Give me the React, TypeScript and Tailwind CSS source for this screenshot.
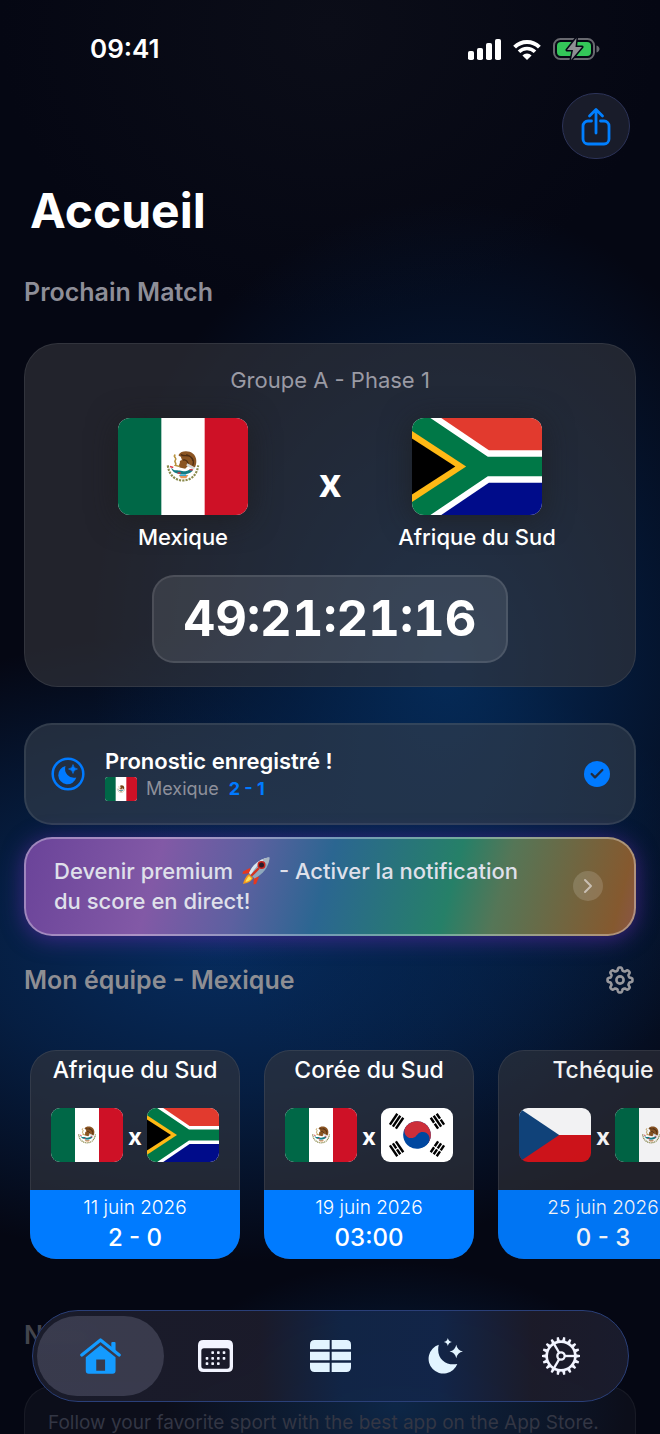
import React from 'react';
import clsx from 'clsx';
import { Check, ChevronRight } from 'lucide-react';

type Country = 'mx' | 'za' | 'kr' | 'cz';

const MATCHES: { title: string; home: Country; away: Country; date: string; score: string; dimmed?: boolean }[] = [
  { title: 'Afrique du Sud', home: 'mx', away: 'za', date: '11 juin 2026', score: '2 - 0' },
  { title: 'Corée du Sud', home: 'mx', away: 'kr', date: '19 juin 2026', score: '03:00' },
  { title: 'Tchéquie', home: 'cz', away: 'mx', date: '25 juin 2026', score: '0 - 3', dimmed: true },
];

const COUNTRY_NAMES: Record<Country, string> = {
  mx: 'Mexique',
  za: 'Afrique du Sud',
  kr: 'Corée du Sud',
  cz: 'Tchéquie',
};

function MexicoFlag() {
  return (
    <>
      <rect width="120" height="90" fill="#fff" />
      <rect width="40" height="90" fill="#006847" />
      <rect x="80" width="40" height="90" fill="#ce1126" />
      {/* wreath */}
      <path d="M46 44c1 9 7 14 14 14s13-5 14-14" fill="none" stroke="#8a8a4c" strokeWidth="2" strokeDasharray="2 1" />
      {/* eagle */}
      <path d="M56 34c2-4 10-4 13-1 4 3 4 9 2 13l-6-2-3 3-5-1c-2-2 1-4 0-6l2-1-1-3-2-1z" fill="#8b5523" />
      <path d="M58 34c3 2 6 0 9 2s3 5 2 8M60 39c3-1 5 2 5 5M63 34c3 1 6 3 6 6" fill="none" stroke="#4f2d12" strokeWidth="1.2" />
      <path d="M64 42l7 4-1 2-7-4z" fill="#d8d8d8" />
      {/* snake */}
      <path d="M53 34c-3 2 2 3 0 5s2 3 0 5l4 1" fill="none" stroke="#b8923f" strokeWidth="1.5" />
      <path d="M49 46c3 4 6 2 9 3s6 0 10-2l1 2c-4 4-8 3-11 3s-8-1-9-6z" fill="#137b83" />
      <path d="M48 45l3 1M55 51h3M66 48h3" stroke="#d93a47" strokeWidth="1.4" />
      <path d="M56 53h9l-2 3h-5z" fill="#e8955a" />
      <path d="M57 53h6" stroke="#3aa7c9" strokeWidth="1.5" />
    </>
  );
}

function SouthAfricaFlag() {
  return (
    <>
      <rect width="120" height="90" fill="#fff" />
      <path d="M27 0h93v30H71z" fill="#e23a2e" />
      <path d="M27 90h93V60H71z" fill="#000c8a" />
      <path d="M0 0h17l53 36h50v18H70L17 90H0z" fill="#007847" />
      <path d="M0 12l50 33L0 78z" fill="#ffb915" />
      <path d="M0 19l40 26L0 71z" fill="#000" />
    </>
  );
}

const TRIGRAMS = [
  { x: 26, y: 22, angle: -56, broken: [false, false, false] },
  { x: 94, y: 22, angle: 56, broken: [true, false, true] },
  { x: 26, y: 68, angle: 56, broken: [false, true, false] },
  { x: 94, y: 68, angle: -56, broken: [true, true, true] },
];

function KoreaFlag() {
  return (
    <>
      <rect width="120" height="90" fill="#fff" />
      <g transform="translate(60 45) rotate(33.7)">
        <circle r="23" fill="#0047a0" />
        <path d="M-23 0a23 23 0 0 1 46 0z" fill="#cd2e3a" />
        <circle cx="-11.5" r="11.5" fill="#cd2e3a" />
        <circle cx="11.5" r="11.5" fill="#0047a0" />
      </g>
      {TRIGRAMS.map(t => (
        <g key={`${t.x}-${t.y}`} transform={`translate(${t.x} ${t.y}) rotate(${t.angle})`}>
          {t.broken.map((broken, i) => (
            <path
              key={i}
              d={broken ? 'M-11 0H-1M1 0H11' : 'M-11 0H11'}
              transform={`translate(0 ${(i - 1) * 6})`}
              stroke="#000"
              strokeWidth="4"
            />
          ))}
        </g>
      ))}
    </>
  );
}

function CzechFlag() {
  return (
    <>
      <rect width="120" height="45" fill="#fff" />
      <rect y="45" width="120" height="45" fill="#d7141a" />
      <path d="M0 0l67 45L0 90z" fill="#11457e" />
    </>
  );
}

const FLAGS: Record<Country, () => React.ReactElement> = {
  mx: MexicoFlag,
  za: SouthAfricaFlag,
  kr: KoreaFlag,
  cz: CzechFlag,
};

function Flag({ country, className }: { country: Country; className: string }) {
  const Artwork = FLAGS[country];
  return (
    <svg
      viewBox="0 0 120 90"
      preserveAspectRatio="none"
      role="img"
      aria-label={COUNTRY_NAMES[country]}
      className={clsx('block shrink-0', className)}
    >
      <Artwork />
    </svg>
  );
}

function SignalIcon() {
  return (
    <svg viewBox="0 0 33 21" className="w-[33px] h-[21px]" fill="#fff">
      <rect y="12" width="6" height="9" rx="1.8" />
      <rect x="9" y="9" width="6" height="12" rx="1.8" />
      <rect x="18" y="4" width="6" height="17" rx="1.8" />
      <rect x="27" width="6" height="21" rx="1.8" />
    </svg>
  );
}

function WifiIcon() {
  return (
    <svg viewBox="0 0 28 21" className="w-7 h-[21px]" fill="none" stroke="#fff">
      <path d="M1.6 8.2a17.5 17.5 0 0 1 24.8 0" strokeWidth="4" />
      <path d="M6 12.8a11.2 11.2 0 0 1 16 0" strokeWidth="3.6" />
      <path d="M9.4 16.4a6.5 6.5 0 0 1 9.2 0L14 21z" fill="#fff" stroke="none" />
    </svg>
  );
}

function BatteryIcon() {
  return (
    <svg viewBox="0 0 47 22" className="w-[47px] h-[22px]">
      <rect x="1" y="1" width="40" height="20" rx="6.5" fill="none" stroke="#68696f" strokeWidth="2" />
      <path d="M43.5 7.5c2 .6 3 2 3 3.5s-1 2.9-3 3.5z" fill="#68696f" />
      <rect x="4" y="4" width="34" height="14" rx="4" fill="#34c759" />
      <path
        d="M23.5 0L14 12h6l-2 10L29 9h-6.5z"
        fill="#8e8e93"
        stroke="#060816"
        strokeWidth="3"
        strokeLinejoin="round"
        paintOrder="stroke"
      />
    </svg>
  );
}

function ShareIcon() {
  return (
    <svg
      viewBox="0 0 32 40"
      className="w-8 h-10"
      fill="none"
      stroke="#007fff"
      strokeWidth="2.8"
      strokeLinecap="round"
      strokeLinejoin="round"
    >
      <path d="M11.5 15H8a5 5 0 0 0-5 5V33a5 5 0 0 0 5 5h16a5 5 0 0 0 5-5V20a5 5 0 0 0-5-5h-3.5" />
      <path d="M16 27V4M9.5 10L16 3.5l6.5 6.5" />
    </svg>
  );
}

function MoonBadgeIcon() {
  return (
    <svg viewBox="0 0 34 34" className="w-[34px] h-[34px] shrink-0" fill="#007aff">
      <circle cx="17" cy="17" r="15.3" fill="none" stroke="#007aff" strokeWidth="2.5" />
      <path d="M14.5 9A9.2 9.2 0 1 0 25.3 20.5A9 9 0 0 1 14.5 9z" />
      <path d="M22 7.5q.5 4 4.5 4.5q-4 .5-4.5 4.5q-.5-4-4.5-4.5q4-.5 4.5-4.5z" stroke="#007aff" strokeWidth=".6" />
    </svg>
  );
}

function RocketIcon() {
  return (
    <svg viewBox="0 0 28 28" className="inline-block w-7 h-7 mx-[3px] align-[-6px]" role="img" aria-label="🚀">
      <path d="M8 11L1 14.5L.5 17L9 16z" fill="#e5381f" />
      <path d="M17 20L14 27l-2.5.5L12 19z" fill="#e5381f" />
      <path d="M7 17c-3 2-5 6-6 10 4-1 8-2 10-6z" fill="#f59a1b" />
      <path d="M7 19c-2 2-3 4-3.5 6 2-.5 5-1.5 6-3.5z" fill="#ffe75a" />
      <path d="M27.5.5C19 1 11 7 7 16l5.5 5.5C21 17 27 10 27.5.5z" fill="#8fa9bd" />
      <path d="M27.5.5C19 1 11 7 7 16l2 2C13 10 19 4 27.5.5z" fill="#d8e6ef" />
      <path d="M27.5.5c-2.5.1-5 .8-7.3 2l5.2 5.3c1.2-2.3 2-4.7 2.1-7.3z" fill="#a9b6c2" />
      <circle cx="19.5" cy="8" r="4" fill="#c9231d" />
      <circle cx="19.5" cy="8" r="2.5" fill="#2b1d2a" />
      <path d="M16 12l-6 6" stroke="#d5321f" strokeWidth="2.4" strokeLinecap="round" />
    </svg>
  );
}

// Scalloped outline with eight rounded teeth
const GEAR_OUTLINE =
  Array.from({ length: 160 }, (_, i) => {
    const a = (i / 160) * Math.PI * 2;
    const r = 11 + 1.5 * Math.tanh(2.2 * Math.cos(8 * a));
    return `${i === 0 ? 'M' : 'L'}${(14 + r * Math.cos(a)).toFixed(2)} ${(14 + r * Math.sin(a)).toFixed(2)}`;
  }).join('') + 'Z';

function GearOutlineIcon() {
  return (
    <svg viewBox="0 0 28 28" className="w-7 h-7" fill="none" stroke="#98989d" strokeWidth="2.6" strokeLinejoin="round">
      <path d={GEAR_OUTLINE} />
      <circle cx="14" cy="14" r="3.6" />
    </svg>
  );
}

function HomeIcon() {
  return (
    <svg viewBox="0 0 124 110" className="w-[41px] h-9" fill="#149bff">
      <path d="M5 52L62 6l57 46" fill="none" stroke="#149bff" strokeWidth="10" strokeLinecap="round" strokeLinejoin="round" />
      <path d="M95 15q0-3 3-3h7q3 0 3 3v28L95 32z" />
      <path fillRule="evenodd" d="M17 59l45-37 46 37v41q0 9-9 9H26q-9 0-9-9zM49 66v34h27V66z" />
    </svg>
  );
}

const CALENDAR_DOTS = [
  [44, 38], [61, 38], [78, 38],
  [27, 55], [44, 55], [61, 55], [78, 55],
  [27, 71], [44, 71], [61, 71],
];

function CalendarIcon() {
  return (
    <svg viewBox="0 0 105 96" className="w-[35px] h-8" fill="#f2f4ff">
      <path
        fillRule="evenodd"
        d="M16 0h73q16 0 16 16v64q0 16-16 16H16Q0 96 0 80V16Q0 0 16 0zM18 25q-8 0-8 8v45q0 8 8 8h69q8 0 8-8V33q0-8-8-8z"
      />
      {CALENDAR_DOTS.map(([x, y]) => (
        <rect key={`${x}-${y}`} x={x - 4} y={y - 4} width="8" height="8" rx="2" />
      ))}
    </svg>
  );
}

function TableIcon() {
  return (
    <svg viewBox="0 0 123 96" className="w-[41px] h-8" fill="#e2f4ff">
      <path d="M14 0h45v28H0V14Q0 0 14 0zM65 0h44q14 0 14 14v14H65z" />
      <path d="M0 35h59v26H0zM65 35h58v26H65z" />
      <path d="M0 68h59v28H14Q0 96 0 82zM65 68h58v14q0 14-14 14H65z" />
    </svg>
  );
}

function MoonIcon() {
  return (
    <svg viewBox="0 0 104 110" className="w-[35px] h-[37px]" fill="#e2f4ff">
      <path d="M32 20A44 44 0 1 0 87 77C55 84 22 62 32 20z" />
      <path d="M59 0q2 10 12 12q-10 2-12 12q-2-10-12-12q10-2 12-12z" />
      <path d="M84 20q3 17 20 20q-17 3-20 20q-3-17-20-20q17-3 20-20z" />
    </svg>
  );
}

function CogIcon() {
  return (
    <svg viewBox="-57 -57 114 114" className="w-[38px] h-[38px]" fill="none" stroke="#f2f4ff">
      <circle r="43" strokeWidth="8" />
      <circle r="11" strokeWidth="7" />
      {[0, 120, 240].map(a => (
        <path key={a} d="M12 0H42" strokeWidth="7" transform={`rotate(${a})`} />
      ))}
      {Array.from({ length: 18 }, (_, i) => (
        <path key={i} d="M45-5L57-3V3L45 5z" fill="#f2f4ff" stroke="none" transform={`rotate(${i * 20})`} />
      ))}
    </svg>
  );
}

const TABS = [
  { label: 'Accueil', icon: HomeIcon, active: true },
  { label: 'Calendrier', icon: CalendarIcon, active: false },
  { label: 'Classement', icon: TableIcon, active: false },
  { label: 'Pronostics', icon: MoonIcon, active: false },
  { label: 'Réglages', icon: CogIcon, active: false },
];

function Team({ country }: { country: Country }) {
  return (
    <div className="w-40 flex flex-col items-center">
      <Flag country={country} className="w-[130px] h-[97px] rounded-xl shadow-[0_4px_30px_rgba(28,28,28,0.7)]" />
      <span className="mt-2 text-[22px] leading-7 font-medium whitespace-nowrap">{COUNTRY_NAMES[country]}</span>
    </div>
  );
}

function MatchCard({ match }: { match: (typeof MATCHES)[number] }) {
  return (
    <article
      className={clsx(
        'w-[210px] shrink-0 rounded-[26px] overflow-hidden bg-[#36373d99] inset-ring inset-ring-white/8 text-center',
        match.dimmed && 'opacity-95',
      )}
    >
      <h3 className="pt-1 text-[23px] leading-8 font-medium whitespace-nowrap">{match.title}</h3>
      <div className="mt-[22px] flex items-center justify-center">
        <Flag country={match.home} className="w-[72px] h-[54px] rounded-[9px]" />
        <span className="w-6 pt-1 text-2xl leading-7 font-bold">x</span>
        <Flag country={match.away} className="w-[72px] h-[54px] rounded-[9px]" />
      </div>
      <div className="mt-7 h-[69px] pt-1 bg-[#007bff]">
        <p className="text-[19px] leading-7 font-light">{match.date}</p>
        <p className="text-2xl leading-8 font-medium">{match.score}</p>
      </div>
    </article>
  );
}

export default function App() {
  return (
    <div className="h-screen overflow-hidden text-white font-['Inter','Liberation_Sans',sans-serif] bg-[#050713] bg-[radial-gradient(ellipse_54%_32%_at_68%_46%,#053062dd,#04265299_45%,transparent),radial-gradient(ellipse_82%_22%_at_34%_66%,#07326add,#062a5aaa_45%,transparent),radial-gradient(ellipse_35%_10%_at_60%_98%,#07306099,transparent),radial-gradient(ellipse_50%_20%_at_50%_2%,#0b0d18,transparent)]">
      <div className="h-[93px] pt-[33px] pl-[90px] pr-[60px] flex items-start justify-between">
        <time className="text-[26px] leading-8 font-semibold">09:41</time>
        <div className="h-8 flex items-center gap-3">
          <SignalIcon />
          <WifiIcon />
          <BatteryIcon />
        </div>
      </div>

      <header className="px-[30px]">
        <div className="flex justify-end">
          <button
            aria-label="Partager"
            className="w-[68px] h-[66px] rounded-full bg-[#191c2a] border border-[#2c3358] flex items-center justify-center"
          >
            <ShareIcon />
          </button>
        </div>
        <h1 className="mt-[22px] text-5xl leading-[60px] font-bold">Accueil</h1>
      </header>

      <main className="px-6">
        <h2 className="mt-[35px] text-[25px] leading-8 font-semibold text-[#8e8e98]">Prochain Match</h2>

        {/* Next match */}
        <section className="mt-[35px] pt-[22px] pb-[23px] rounded-[34px] bg-[#36373d99] border border-white/8 flex flex-col items-center">
          <p className="text-[22px] leading-7 text-[#9a9aa4]">Groupe A - Phase 1</p>
          <div className="mt-6 flex items-center justify-center">
            <Team country="mx" />
            <span className="w-[134px] pb-1 text-center text-[40px] leading-10 font-bold">x</span>
            <Team country="za" />
          </div>
          <div className="mt-6 h-[88px] px-[30px] rounded-[22px] bg-white/10 border-2 border-white/10 flex items-center text-[49px] leading-[60px] font-bold tabular-nums">
            49:21:21:16
          </div>
        </section>

        {/* Saved prediction */}
        <section className="mt-9 h-[102px] pl-[25px] pr-[24px] rounded-[28px] bg-[#36404d99] border-2 border-white/8 flex items-center">
          <MoonBadgeIcon />
          <div className="ml-5 flex-1">
            <p className="text-[22px] leading-7 font-semibold">Pronostic enregistré !</p>
            <div className="mt-0.5 flex items-center text-lg leading-6">
              <Flag country="mx" className="w-8 h-6 rounded-[3px]" />
              <span className="ml-[9px] text-[#8e909b]">Mexique</span>
              <span className="ml-[10px] font-bold text-[#007aff]">2 - 1</span>
            </div>
          </div>
          <span className="w-[26px] h-[26px] rounded-full bg-[#007aff] flex items-center justify-center">
            <Check className="w-4 h-4 text-[#232c3d]" strokeWidth={3.5} />
          </span>
        </section>

        {/* Premium banner */}
        <button className="mt-3 w-full h-[99px] pl-7 pr-[31px] pb-0.5 rounded-[28px] border-2 border-white/35 bg-origin-border bg-[linear-gradient(105deg,#6a4399,#8259a6_22%,#5d60a0_36%,#2b6691_49%,#268068_69%,#557657_77%,#85592f_96%,#8a5548)] shadow-[0_3px_22px_rgba(112,44,190,0.55)] flex items-center justify-between text-left">
          <span className="text-[22px] leading-[30px] font-medium text-[#dfe0ea]">
            Devenir premium <RocketIcon /> - Activer la notification
            <br />
            du score en direct!
          </span>
          <span className="w-[30px] h-[30px] shrink-0 rounded-full bg-white/15 flex items-center justify-center">
            <ChevronRight className="w-6 h-6 text-[#c9bfb2]" />
          </span>
        </button>

        <div className="mt-7 flex items-center justify-between">
          <h2 className="text-[25px] leading-8 font-semibold text-[#8e8e93]">Mon équipe - Mexique</h2>
          <button aria-label="Changer d'équipe" className="mr-0.5">
            <GearOutlineIcon />
          </button>
        </div>
      </main>

      <div className="mt-[54px] px-[30px] flex gap-6 overflow-hidden">
        {MATCHES.map(match => (
          <MatchCard key={match.date} match={match} />
        ))}
      </div>

      <section className="mt-[60px] px-6">
        <h2 className="text-[25px] leading-8 font-semibold text-[#43454d]">News</h2>
        <div className="mt-[35px] h-[102px] pt-[22px] px-[23px] rounded-[28px] bg-white/3 border border-white/5 text-[19px] leading-7 text-[#333644] whitespace-nowrap">
          Follow your favorite sport with the best app on the App Store.
        </div>
      </section>

      {/* Floating tab bar */}
      <nav className="fixed bottom-8 left-8 right-[31px] h-[92px] px-[10px] rounded-full flex items-center border border-[#2a3f78] backdrop-blur-sm bg-[linear-gradient(90deg,#1b1d2cf0,#1c1c2bf0_38%,#122647f0_52%,#13264af0_68%,#1d1c2af0_84%,#1b1d2ef0)]">
        {TABS.map(tab => (
          <button
            key={tab.label}
            aria-label={tab.label}
            aria-current={tab.active ? 'page' : undefined}
            className="flex-1 flex"
          >
            <span
              className={clsx(
                '-mx-[6px] flex-1 h-20 flex items-center justify-center rounded-full',
                tab.active && 'bg-[#8084a04d]',
              )}
            >
              <tab.icon />
            </span>
          </button>
        ))}
      </nav>
    </div>
  );
}
